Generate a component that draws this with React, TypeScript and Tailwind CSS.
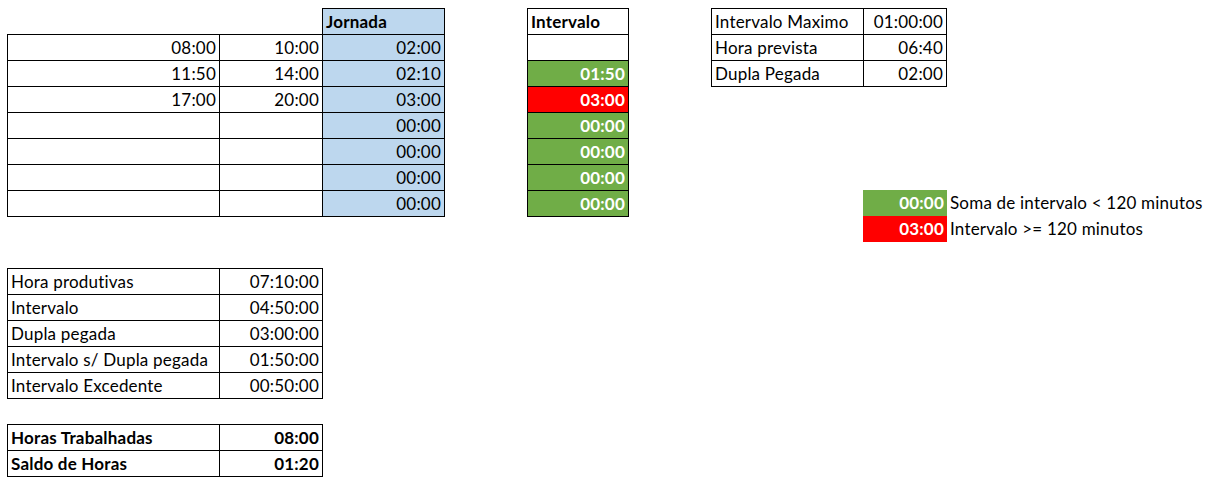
import React from "react"

const jornadaRows = [
  ["08:00", "10:00", "02:00"],
  ["11:50", "14:00", "02:10"],
  ["17:00", "20:00", "03:00"],
  ["", "", "00:00"],
  ["", "", "00:00"],
  ["", "", "00:00"],
  ["", "", "00:00"],
]

const intervalos = [
  { v: "01:50", red: false },
  { v: "03:00", red: true },
  { v: "00:00", red: false },
  { v: "00:00", red: false },
  { v: "00:00", red: false },
  { v: "00:00", red: false },
]

const params = [
  ["Intervalo Maximo", "01:00:00"],
  ["Hora prevista", "06:40"],
  ["Dupla Pegada", "02:00"],
]

const resumo = [
  ["Hora produtivas", "07:10:00"],
  ["Intervalo", "04:50:00"],
  ["Dupla pegada", "03:00:00"],
  ["Intervalo s/ Dupla pegada", "01:50:00"],
  ["Intervalo Excedente", "00:50:00"],
]

const totais = [
  ["Horas Trabalhadas", "08:00"],
  ["Saldo de Horas", "01:20"],
]

function Cell({ children, className = "" }: { children?: React.ReactNode; className?: string }) {
  return (
    <div className={`h-[25px] leading-[25px] px-[3px] whitespace-nowrap overflow-hidden ${className}`}>
      {children}
    </div>
  )
}

export default function App() {
  return (
    <div className="w-[1209px] h-[482px] bg-white text-black text-[17px] tracking-[0.2px] font-['Lato',sans-serif] overflow-hidden">
      <div className="h-[268px] pt-[8px] flex items-start">
        {/* jornada */}
        <div className="ml-[7px] flex flex-col">
          <div className="ml-[315px] w-[123px] h-[26px] border-t border-l border-r border-black bg-[#bdd7ee]">
            <Cell className="font-bold">Jornada</Cell>
          </div>
          <div className="grid grid-cols-[211px_102px_121px] gap-px p-px bg-black w-[438px]">
            {jornadaRows.map((r, i) => (
              <React.Fragment key={i}>
                <Cell className="bg-white text-right">{r[0]}</Cell>
                <Cell className="bg-white text-right">{r[1]}</Cell>
                <Cell className="bg-[#bdd7ee] text-right">{r[2]}</Cell>
              </React.Fragment>
            ))}
          </div>
        </div>

        {/* intervalo */}
        <div className="ml-[82px] grid grid-cols-[100px] gap-px p-px bg-black">
          <Cell className="bg-white font-bold">Intervalo</Cell>
          <Cell className="bg-white" />
          {intervalos.map((c, i) => (
            <Cell
              key={i}
              className={`text-right font-bold text-white ${c.red ? "bg-[#ff0000]" : "bg-[#70ad47]"}`}
            >
              {c.v}
            </Cell>
          ))}
        </div>

        {/* parametros + legenda */}
        <div className="ml-[82px] flex flex-col items-start">
          <div className="grid grid-cols-[151px_82px] gap-px p-px bg-black">
            {params.map((p, i) => (
              <React.Fragment key={i}>
                <Cell className="bg-white">{p[0]}</Cell>
                <Cell className="bg-white text-right">{p[1]}</Cell>
              </React.Fragment>
            ))}
          </div>
          <div className="mt-[103px] ml-[152px] flex flex-col">
            <div className="flex items-center">
              <div className="w-[84px] h-[26px] leading-[26px] bg-[#70ad47] text-white font-bold text-right px-[3px]">00:00</div>
              <span className="ml-[3px] whitespace-nowrap leading-[26px]">Soma de intervalo &lt; 120 minutos</span>
            </div>
            <div className="flex items-center">
              <div className="w-[84px] h-[26px] leading-[26px] bg-[#ff0000] text-white font-bold text-right px-[3px]">03:00</div>
              <span className="ml-[3px] whitespace-nowrap leading-[26px]">Intervalo &gt;= 120 minutos</span>
            </div>
          </div>
        </div>
      </div>

      <div className="ml-[7px] flex flex-col">
        <div className="grid grid-cols-[211px_102px] gap-px p-px bg-black w-[316px]">
          {resumo.map((r, i) => (
            <React.Fragment key={i}>
              <Cell className="bg-white">{r[0]}</Cell>
              <Cell className="bg-white text-right">{r[1]}</Cell>
            </React.Fragment>
          ))}
        </div>
        <div className="mt-[25px] grid grid-cols-[211px_102px] gap-px p-px bg-black w-[316px] font-bold">
          {totais.map((r, i) => (
            <React.Fragment key={i}>
              <Cell className="bg-white">{r[0]}</Cell>
              <Cell className="bg-white text-right">{r[1]}</Cell>
            </React.Fragment>
          ))}
        </div>
      </div>
    </div>
  )
}
